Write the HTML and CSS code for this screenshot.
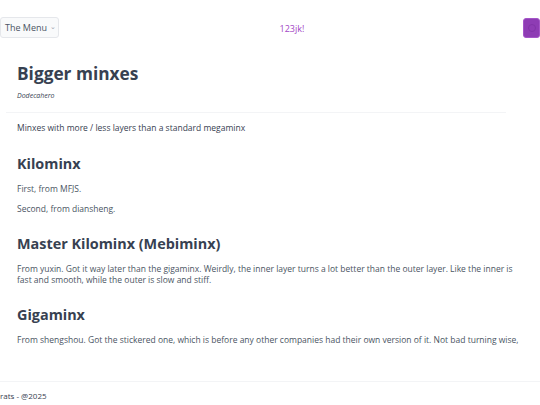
FILE: index.html
```html
<!DOCTYPE html>
<html>
<head>
<meta charset="utf-8">
<link rel="stylesheet" href="styles.css">
</head>
<body>
<header class="topbar">
  <button class="menu-btn">The Menu <span class="chev">&#8964;</span></button>
  <span class="brand">123jk!</span>
  <button class="theme-btn" aria-label="theme"><span class="theme-dot"></span></button>
</header>
<main class="content">
  <h1 class="title">Bigger minxes</h1>
  <p class="author">Dodecahero</p>
  <hr class="divider">
  <p class="intro">Minxes with more / less layers than a standard megaminx</p>
  <h2 class="section">Kilominx</h2>
  <p class="text">First, from MFJS.</p>
  <p class="text">Second, from diansheng.</p>
  <h2 class="section">Master Kilominx (Mebiminx)</h2>
  <p class="text">From yuxin. Got it way later than the gigaminx. Weirdly, the inner layer turns a lot better than the outer layer. Like the inner is fast and smooth, while the outer is slow and stiff.</p>
  <h2 class="section">Gigaminx</h2>
  <p class="text">From shengshou. Got the stickered one, which is before any other companies had their own version of it. Not bad turning wise,</p>
</main>
<footer class="footer">
  <span class="foot-text">rats - @2025</span>
</footer>
</body>
</html>
```
FILE: styles.css
```css
html, body {
  margin: 0;
  padding: 0;
  background: #ffffff;
  overflow: hidden;
}
body {
  font-family: "Open Sans", "Noto Sans", sans-serif;
  color: #4b5563;
  width: 540px;
  height: 405px;
  position: relative;
}
.topbar {
  display: flex;
  justify-content: space-between;
  align-items: center;
  padding-top: 17px;
  height: 21px;
}
.menu-btn {
  font-family: inherit;
  height: 21px;
  width: 59px;
  padding: 0 0 0 4px;
  font-size: 9px;
  color: #4b5563;
  background: #f9fafb;
  border: 1px solid #e5e7eb;
  border-radius: 3px;
  text-align: left;
  display: flex;
  align-items: center;
  gap: 3px;
}
.chev {
  font-size: 7px;
  color: #9ca3af;
  line-height: 1;
  margin-top: -3px;
}
.brand {
  font-size: 9px;
  color: #a347c6;
  width: 23px;
  margin-top: 1px;
}
.theme-btn {
  width: 17px;
  height: 20px;
  padding: 0;
  background: #8e3cb4;
  border: 1px solid #a455c8;
  border-radius: 3px;
  display: flex;
  align-items: center;
  justify-content: center;
}
.theme-dot {
  width: 6px;
  height: 6px;
  border-radius: 50%;
  border: 1px solid #8233a8;
}
.content {
  padding: 0 17px;
}
.title {
  margin: 24px 0 0;
  font-size: 17.3px;
  line-height: 24px;
  font-weight: 700;
  color: #374151;
}
.author {
  margin: 5px 0 0;
  font-size: 7px;
  font-style: italic;
  color: #374151;
}
.divider {
  margin: 12px 17px 0 -11px;
  border: 0;
  height: 1px;
  background: #f3f4f6;
}
.intro {
  margin: 9px 0 0;
  font-size: 8.5px;
  line-height: 12px;
  color: #374151;
}
.section {
  margin: 19px 0 0;
  font-size: 14.4px;
  line-height: 22px;
  font-weight: 700;
  color: #374151;
}
.text {
  margin: 9px 0 0;
  font-size: 8.5px;
  line-height: 11px;
  color: #4b5563;
}
.section + .text {
  margin-top: 8px;
}
.footer {
  position: absolute;
  left: 0;
  right: 0;
  top: 381px;
  border-top: 1px solid #f3f4f6;
  height: 24px;
}
.foot-text {
  display: block;
  margin-top: 8px;
  font-size: 8px;
  color: #374151;
}
```
